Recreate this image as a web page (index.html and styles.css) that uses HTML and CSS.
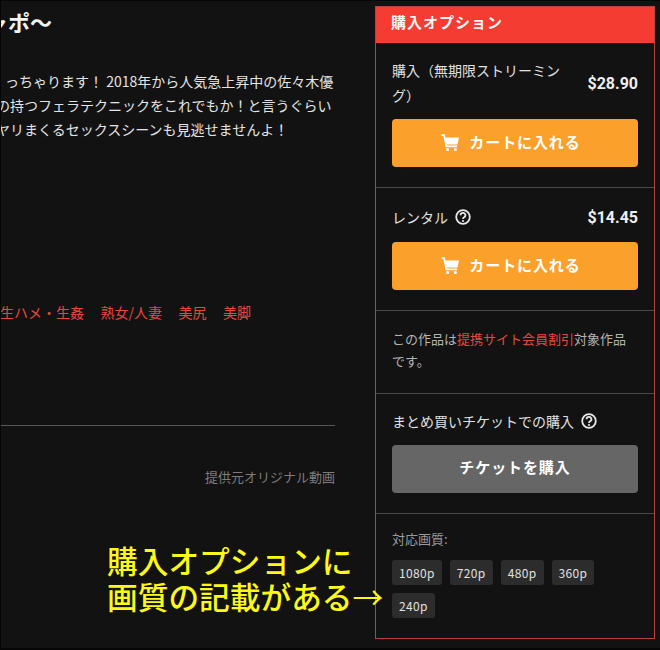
FILE: index.html
```html
<!DOCTYPE html>
<html lang="ja">
<head>
<meta charset="utf-8">
<title>購入オプション</title>
<link rel="stylesheet" href="styles.css">
</head>
<body>
<div class="frame">
  <main class="content">
    <h1 class="title">ャポ〜</h1>
    <div class="desc">
      <p class="line-a">っちゃります！ 2018年から人気急上昇中の佐々木優</p>
      <p class="line-b">の持つフェラテクニックをこれでもか！と言うぐらい</p>
      <p class="line-c">ヤリまくるセックスシーンも見逃せませんよ！</p>
    </div>
    <div class="tags">
      <a>生ハメ・生姦</a><a>熟女/人妻</a><a>美尻</a><a>美脚</a>
    </div>
    <hr class="rule">
    <p class="source">提供元オリジナル動画</p>
  </main>
  <aside class="panel">
    <h2 class="panel-head">購入オプション</h2>
    <section class="opt opt-first">
      <div class="price-row">
        <span class="label label-wrap">購入（無期限ストリーミング）</span>
        <span class="price">$28.90</span>
      </div>
      <button class="btn btn-cart"><svg class="cart" viewBox="0 0 20 18"><path class="cart-line" d="M0.5 1.2H3.2L5.6 13.2H17"/><path d="M4.4 3.6H19L17.4 11H5.8z"/><rect x="5.4" y="15" width="3" height="3" rx="1"/><rect x="13.6" y="15" width="3" height="3" rx="1"/></svg>カートに入れる</button>
    </section>
    <section class="opt opt-rental">
      <div class="price-row">
        <span class="label">レンタル<svg class="help" viewBox="0 0 16 16"><circle cx="8" cy="8" r="6.8"/><path d="M5.6 6.3a2.4 2.4 0 1 1 3.6 2c-.8.5-1.2.9-1.2 1.6"/><circle class="dot" cx="8" cy="12" r="1.1"/></svg></span>
        <span class="price">$14.45</span>
      </div>
      <button class="btn btn-cart"><svg class="cart" viewBox="0 0 20 18"><path class="cart-line" d="M0.5 1.2H3.2L5.6 13.2H17"/><path d="M4.4 3.6H19L17.4 11H5.8z"/><rect x="5.4" y="15" width="3" height="3" rx="1"/><rect x="13.6" y="15" width="3" height="3" rx="1"/></svg>カートに入れる</button>
    </section>
    <section class="opt opt-note">
      <p class="note">この作品は<a>提携サイト会員割引</a>対象作品です。</p>
    </section>
    <section class="opt opt-ticket">
      <p class="label ticket-label">まとめ買いチケットでの購入<svg class="help" viewBox="0 0 16 16"><circle cx="8" cy="8" r="6.8"/><path d="M5.6 6.3a2.4 2.4 0 1 1 3.6 2c-.8.5-1.2.9-1.2 1.6"/><circle class="dot" cx="8" cy="12" r="1.1"/></svg></p>
      <button class="btn btn-ticket">チケットを購入</button>
    </section>
    <section class="opt opt-quality">
      <p class="quality-label">対応画質:</p>
      <ul class="chips">
        <li>1080p</li><li>720p</li><li>480p</li><li>360p</li><li>240p</li>
      </ul>
    </section>
  </aside>
  <p class="callout">購入オプションに<br>画質の記載がある<span class="arrow">→</span></p>
</div>
</body>
</html>
```
FILE: styles.css
```css
* { box-sizing: border-box; }
html, body { margin: 0; padding: 0; height: 100%; }
body {
  background: #060606;
  font-family: "Noto Sans CJK JP", "Liberation Sans", sans-serif;
  color: #e6e6e6;
  overflow: hidden;
}
.frame {
  position: relative;
  display: flex;
  height: 647px;
  margin: 1px 0 2px 1px;
  padding: 5px 5px 9px 0;
  background: #121212;
}
.content {
  width: 334px;
  flex: none;
  overflow: hidden;
}
.title {
  margin: 0 0 0 -15px;
  width: 70px;
  height: 36px;
  font-size: 22px;
  line-height: 30px;
  font-weight: 700;
  color: #f2f2f2;
  white-space: nowrap;
}
.desc { margin-top: 27px; font-size: 14px; line-height: 24px; color: #e4e4e4; }
.desc p { margin: 0; white-space: nowrap; }
.desc .line-a { margin-left: 4px; }
.desc .line-b { margin-left: -5px; }
.desc .line-c { margin-left: -5px; }
.tags { margin-top: 161px; margin-left: -1px; display: flex; gap: 16.5px; font-size: 14px; line-height: 20px; color: #e8483c; white-space: nowrap; }
.rule { margin: 103px 0 0; border: 0; border-top: 1px solid #565656; }
.source { margin: 41px 0 0; text-align: right; font-size: 13px; line-height: 20px; color: #7c7c7c; }
.panel {
  width: 280px;
  margin-left: 40px;
  flex: none;
  border: 1px solid #b5433d;
  background: #121212;
}
.panel-head {
  margin: 0;
  height: 36px;
  padding-left: 15px;
  background: #f43c33;
  color: #f6f6f6;
  font-size: 15px;
  font-weight: 700;
  line-height: 30px;
  letter-spacing: 1px;
}
.opt { padding: 16px 16px 20px; border-bottom: 1px solid #4a4a4a; }
.opt-first { height: 145px; padding-top: 10px; }
.opt-rental { height: 123px; }
.opt-note { height: 83px; padding-top: 17px; }
.opt-ticket { height: 120px; padding-top: 15px; }
.opt-quality { border-bottom: 0; padding-top: 15px; }
.price-row { display: flex; align-items: center; justify-content: space-between; }
.opt-first .price-row { height: 60px; }
.opt-rental .price-row { height: 22px; margin-bottom: 14px; margin-top: 2px; }
.label { display: flex; align-items: center; font-size: 14px; line-height: 25px; color: #e0e0e0; }
.label-wrap { display: block; width: 170px; }
.price { font-family: "Roboto", "Liberation Sans", sans-serif; font-size: 16px; font-weight: 700; color: #eeeeee; }
.help { width: 16px; height: 16px; margin-left: 7px; fill: none; stroke: #e8e8e8; stroke-width: 1.8; }
.help .dot { fill: #e8e8e8; stroke: none; }
.btn {
  display: flex;
  align-items: center;
  justify-content: center;
  width: 100%;
  height: 48px;
  border: 0;
  border-radius: 4px;
  color: #ffffff;
  font-family: inherit;
  font-size: 15px;
  font-weight: 700;
  letter-spacing: 0.9px;
  padding: 0 0 4px;
}
.btn-cart { background: #fba02a; margin-top: 6px; padding-right: 8px; }
.opt-rental .btn-cart { margin-top: 0; }
.cart { width: 19px; height: 17px; margin: 3px 9px 0 0; fill: #ffffff; }
.cart-line { fill: none; stroke: #ffffff; stroke-width: 1.8; }
.btn-ticket { background: #666666; padding-bottom: 6px; }
.note { margin: 0; font-size: 13px; line-height: 22px; color: #b4b4b4; }
.note a { color: #e8483c; }
.ticket-label { margin: 0 0 12px; line-height: 24px; }
.quality-label { margin: 0 0 11px; font-size: 13px; line-height: 20px; color: #9a9a9a; }
.chips { display: flex; flex-wrap: wrap; gap: 8px; width: 230px; margin: 0; padding: 0; list-style: none; }
.chips li {
  height: 25px;
  padding: 0 7px;
  border-radius: 3px;
  background: #2c2c2c;
  font-size: 12px;
  line-height: 25px;
  letter-spacing: 0.35px;
  color: #e0e0e0;
}
.callout {
  position: absolute;
  left: 106px;
  top: 541px;
  margin: 0;
  font-size: 30.7px;
  font-weight: 500;
  line-height: 36px;
  color: #fcf81a;
  white-space: nowrap;
}
.arrow { font-weight: 400; }
```
